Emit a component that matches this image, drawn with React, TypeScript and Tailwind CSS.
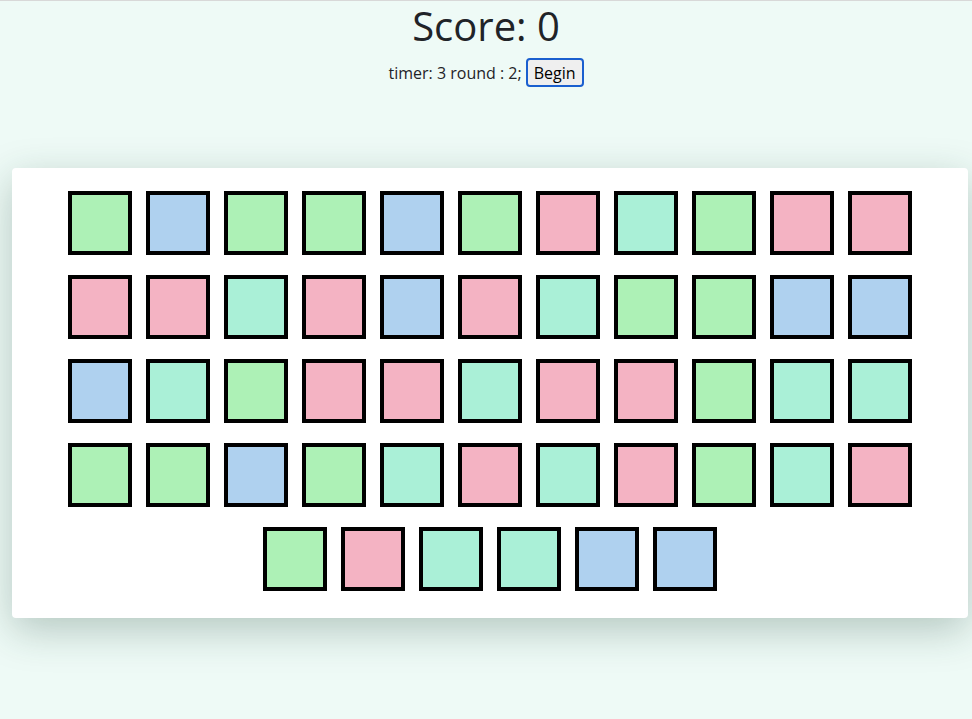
import React from "react";

const C: Record<string, string> = {
  G: "bg-[#adf1b6]",
  B: "bg-[#afd1ef]",
  P: "bg-[#f4b3c3]",
  T: "bg-[#aaf0d7]",
};

const tiles = "GBGGBGPTGPP" + "PPTPBPTGGBB" + "BTGPPTPPGTT" + "GGBGTPTPGTP" + "GPTTBB";

export default function App() {
  return (
    <div
      className="min-h-[719px] bg-[#eefaf6] border-t border-[#d8d8d8] text-[#1f2328]"
      style={{ fontFamily: '"Open Sans", sans-serif' }}
    >
      <h1 className="text-center text-[40px] leading-[50px] m-0">Score: 0</h1>
      <div className="flex items-center justify-center mt-[7px] text-[16px] gap-[4px]">
        <span>timer: 3 round : 2;</span>
        <button className="h-[29px] px-[6px] border-2 border-[#1a5fcf] rounded-[4px] bg-[#efefef] text-[16px] text-black leading-none">
          Begin
        </button>
      </div>
      <div className="ml-[12px] w-[956px] mt-[81px] bg-white rounded-[4px] shadow-[0_12px_40px_rgba(30,70,55,0.28)] pt-[23px] pb-[27px]">
        <div className="mx-auto w-[860px] flex flex-wrap justify-center gap-x-[14px] gap-y-[20px]">
          {tiles.split("").map((c, i) => (
            <div key={i} className={`w-[64px] h-[64px] border-4 border-black ${C[c]}`} />
          ))}
        </div>
      </div>
    </div>
  );
}
